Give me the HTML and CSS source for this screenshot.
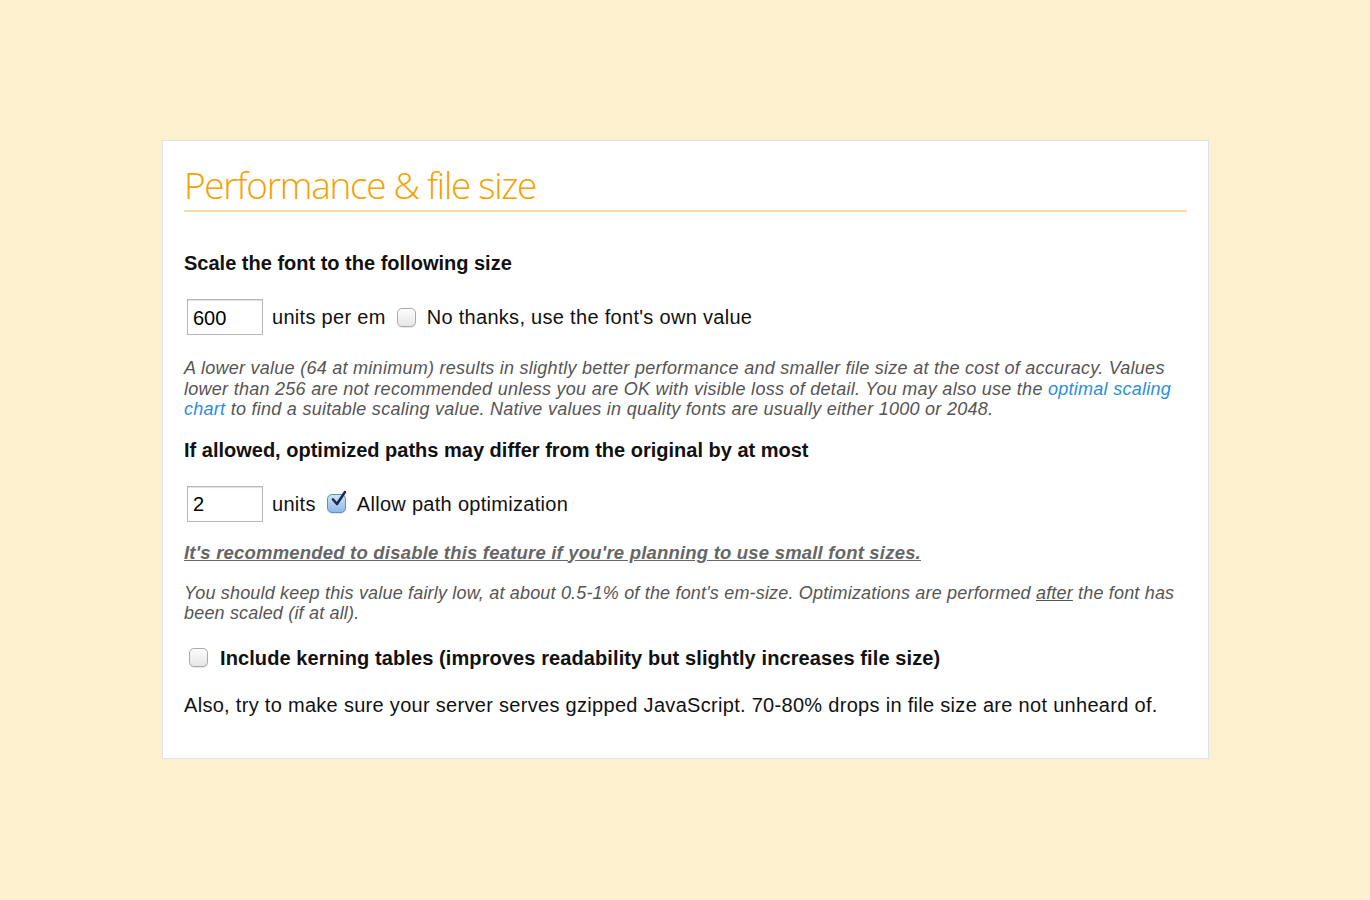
FILE: index.html
```html
<!DOCTYPE html>
<html>
<head>
<meta charset="utf-8">
<link rel="stylesheet" href="styles.css">
</head>
<body>
<div class="card">
  <h2 class="title">Performance &amp; file size</h2>
  <h3 class="label">Scale the font to the following size</h3>
  <div class="row">
    <input class="num" type="text" value="600">
    <span>units per em</span>
    <span class="cb"></span>
    <span>No thanks, use the font's own value</span>
  </div>
  <p class="note">A lower value (64 at minimum) results in slightly better performance and smaller file size at the cost of accuracy. Values lower than 256 are not recommended unless you are OK with visible loss of detail. You may also use the <a href="#">optimal scaling chart</a> to find a suitable scaling value. Native values in quality fonts are usually either 1000 or 2048.</p>
  <h3 class="label label2">If allowed, optimized paths may differ from the original by at most</h3>
  <div class="row">
    <input class="num" type="text" value="2">
    <span>units</span>
    <span class="cb checked"><svg viewBox="0 0 20 20" width="20" height="20"><path d="M5 9.5 L9 14 L17 2" fill="none" stroke="#1b2a4a" stroke-width="2.6" stroke-linecap="round" stroke-linejoin="round"/></svg></span>
    <span>Allow path optimization</span>
  </div>
  <p class="warn">It's recommended to disable this feature if you're planning to use small font sizes.</p>
  <p class="note note2">You should keep this value fairly low, at about 0.5-1% of the font's em-size. Optimizations are performed <u>after</u> the font has been scaled (if at all).</p>
  <div class="row kern">
    <span class="cb"></span>
    <span class="kern-label">Include kerning tables (improves readability but slightly increases file size)</span>
  </div>
  <p class="plain">Also, try to make sure your server serves gzipped JavaScript. 70-80% drops in file size are not unheard of.</p>
</div>
</body>
</html>
```
FILE: styles.css
```css
html, body {
  margin: 0;
  padding: 0;
}
body {
  background: #fcf0ce;
  font-family: "Liberation Sans", Arial, sans-serif;
  color: #111;
  padding: 140px 0 0 162px;
}
.card {
  box-sizing: border-box;
  width: 1047px;
  height: 619px;
  background: #fff;
  border: 1px solid #dde3ee;
  padding: 20px 21px 0 21px;
}
.title {
  margin: 0;
  font-family: "Open Sans", sans-serif;
  font-weight: 300;
  font-size: 37px;
  letter-spacing: -1.3px;
  color: #f5a000;
  line-height: 48px;
  padding-bottom: 1px;
  border-bottom: 2px solid #f7dca4;
}
.label {
  margin: 39px 0 0 0;
  font-size: 20px;
  font-weight: bold;
  letter-spacing: 0;
  line-height: 24px;
}
.label2 {
  margin-top: 18px;
}
.row {
  display: flex;
  align-items: center;
  gap: 9px;
  margin-top: 24px;
  font-size: 20px;
  letter-spacing: 0.3px;
  line-height: 24px;
}
.num {
  box-sizing: border-box;
  width: 76px;
  height: 36px;
  margin: 0 0 0 3px;
  padding: 2px 5px 0;
  border: 1px solid #b8b8b8;
  box-shadow: inset 0 1px 1px rgba(0,0,0,0.12);
  font-family: "Liberation Sans", Arial, sans-serif;
  font-size: 20px;
  color: #000;
  outline: none;
}
.cb {
  box-sizing: border-box;
  display: inline-flex;
  align-items: center;
  justify-content: center;
  width: 19px;
  height: 19px;
  border: 1px solid #a9a9a9;
  border-radius: 5px;
  background: linear-gradient(#fdfdfd, #e6e6e6);
  box-shadow: 0 1px 1px rgba(0,0,0,0.1);
  margin: 0 2px;
  position: relative;
}
.cb.checked {
  background: linear-gradient(#cfe2f7, #8db9ea);
  border-color: #5f8fc6;
}
.cb svg {
  position: absolute;
  left: 0;
  top: -5px;
}
.note {
  margin: 23px 0 0 0;
  font-size: 18px;
  font-style: italic;
  line-height: 20.5px;
  color: #555;
  letter-spacing: 0.27px;
}
.note a {
  color: #2a8ee0;
  text-decoration: none;
}
.warn {
  margin: 21px 0 0 0;
  font-size: 18.5px;
  font-style: italic;
  font-weight: bold;
  letter-spacing: 0.2px;
  color: #666;
  text-decoration: underline;
  line-height: 20px;
}
.note2 {
  margin-top: 20px;
  letter-spacing: 0.18px;
}
.kern {
  margin-top: 22px;
  gap: 10px;
  letter-spacing: 0.1px;
}
.kern .cb {
  margin-left: 5px;
}
.kern-label {
  font-weight: bold;
}
.plain {
  margin: 23px 0 0 0;
  font-size: 20px;
  letter-spacing: 0.3px;
  line-height: 24px;
}
```
